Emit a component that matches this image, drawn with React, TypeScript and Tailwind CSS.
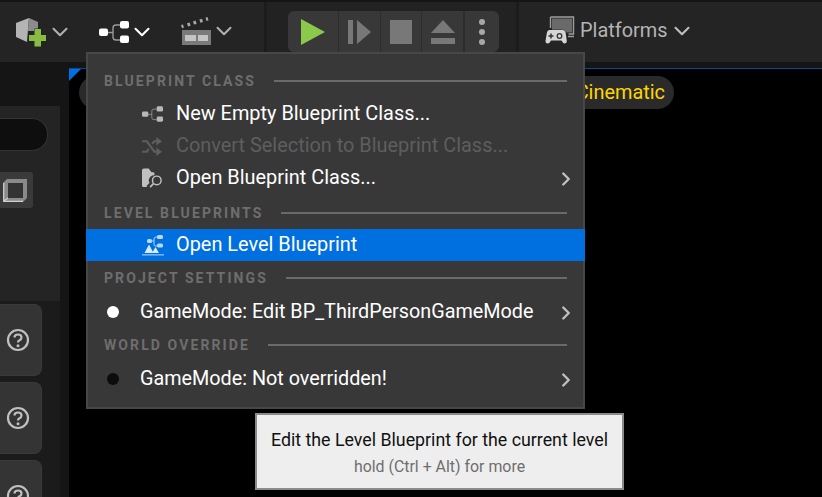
import {ChevronDown, ChevronRight} from 'lucide-react';
import {ReactNode} from 'react';

function BlueprintIcon({className, fill = '#fff', line = '#9a9a9a'}: {className?: string; fill?: string; line?: string}) {
  return (
    <svg viewBox="0 0 30 22" className={className}>
      <path d="M8 11.500h6M21 4h-4q-3 0-3 3v9q0 3 3 3h4" fill="none" stroke={line} strokeWidth="1.400" />
      <rect x="0" y="7.500" width="9" height="7.500" rx="2" fill={fill} />
      <rect x="21" y="0" width="9" height="7.500" rx="2" fill={fill} />
      <rect x="21" y="14.500" width="9" height="7.500" rx="2" fill={fill} />
    </svg>
  );
}

function AddActorIcon() {
  return (
    <svg viewBox="0 0 30 30" className="w-[30px] h-[30px]">
      <path d="M0 6 13 1l-1 11-1 13L0 20z" fill="#b4b4b4" />
      <path d="M13 1l9 4v9H11.500L12 12z" fill="#8c8c8c" />
      <path d="M18.500 12h6.500v6H30v6h-5v5.500h-6.500V24H13v-6h5.500z" fill="#86bd42" stroke="#242424" strokeWidth="1" paintOrder="stroke" />
    </svg>
  );
}

function CinematicIcon() {
  return (
    <svg viewBox="0 0 30 28" className="w-[30px] h-[28px]">
      <path d="M0 8 2 7.400l1 3.200-2 .6zM6 6.200 8.600 5.400l1 3.300-2.600.7zM12 4.400 14.600 3.600l1 3.300-2.600.7zM18.400 2.600 21 1.800l1 3.300-2.600.7zM24.500.8 26.500 0l1 3.200-2 .7z" fill="#a8a8a8" />
      <path d="M1 13h29v15H1z" fill="#7a7a7a" />
      <path d="M4 18h11v6H4zM17 18h10v6H17z" fill="#c4c4c4" />
    </svg>
  );
}

function PlatformsIcon() {
  return (
    <svg viewBox="0 0 30 30" className="w-[30px] h-[30px]">
      <path d="M5.500 1h23v17h-5M5.500 1v11" fill="none" stroke="#9e9e9e" strokeWidth="1.400" />
      <path d="M7 2.500h20v14H7z" fill="#6a6a6a" />
      <path d="M23 20.500h6" stroke="#9e9e9e" strokeWidth="1.500" />
      <path d="M4.500 14h13q3 0 3.500 5l.8 6q0 2.500-2.300 2.500-1.500 0-3-3H6q-1.500 3-3 3Q.5 27.500.5 25l1-6q.5-5 3-5z" fill="#d6d6d6" stroke="#242424" strokeWidth="0.800" paintOrder="stroke" />
      <path d="M3.500 20h5M6 17.500v5" stroke="#333" strokeWidth="1.500" />
      <circle cx="14.500" cy="20" r="2.300" fill="none" stroke="#333" strokeWidth="1.300" />
    </svg>
  );
}

function ShuffleIcon() {
  return (
    <svg viewBox="0 0 22 20" className="w-[21px] h-[19px]">
      <path d="M0 4.500h5l8 11h4M0 15.500h5l2-3M10.500 7l2.500-2.500h4" fill="none" stroke="#5e5e5e" strokeWidth="2.200" />
      <path d="M15 0l6 4.500-6 4.500zM15 11l6 4.500-6 4.500z" fill="#5e5e5e" />
    </svg>
  );
}

function FolderSearchIcon() {
  return (
    <svg viewBox="0 0 22 20" className="w-[21px] h-[20px]">
      <path d="M0 2q0-2 2-2h5l3 4h2q1 0 1 1v2q-5 0-6 5 0 2 1 3l-3 3v1.500H1.500Q0 19.500 0 18z" fill="#c0c0c0" />
      <circle cx="15.500" cy="12.500" r="4.500" fill="none" stroke="#c0c0c0" strokeWidth="1.500" />
      <path d="M12 16l-3.500 3.500" stroke="#c0c0c0" strokeWidth="1.800" />
    </svg>
  );
}

function LevelBlueprintIcon() {
  return (
    <svg viewBox="0 0 22 22" className="w-[22px] h-[22px]">
      <path d="M9 7h3M16 3h-2q-2 0-2 2v6q0 1 2 1h2" fill="none" stroke="#a8d0f5" strokeWidth="1" />
      <rect x="5" y="5" width="5" height="4" rx="1.500" fill="#b8daf8" />
      <rect x="15" y="1" width="6" height="4" rx="1.500" fill="#b8daf8" />
      <rect x="15" y="9.500" width="6" height="4" rx="1.500" fill="#b8daf8" />
      <path d="M7 10.500l4.500 8.500h-9zM13.500 13l3.500 6h-7z" fill="#d8eafc" />
      <path d="M0 21.500h22v-1.300H0z" fill="#8cc2f2" />
    </svg>
  );
}

function HelpTile() {
  return (
    <div className="w-[42px] h-[72px] rounded-r-[8px] bg-[#343434] border border-l-0 border-[#3a3a3a] flex items-center justify-end pr-[11px] shrink-0">
      <svg viewBox="0 0 24 24" className="w-[24px] h-[24px]">
        <circle cx="12" cy="12" r="10" fill="none" stroke="#c0c0c0" strokeWidth="2.200" />
        <path d="M8.500 9.500q0-3 3.500-3t3.500 3q0 1.800-2 2.700-1.500.7-1.500 2.300" fill="none" stroke="#c0c0c0" strokeWidth="2.200" />
        <circle cx="12" cy="17.800" r="1.500" fill="#c0c0c0" />
      </svg>
    </div>
  );
}

function SectionHeader({children, className}: {children: ReactNode; className?: string}) {
  return (
    <div className={`flex items-center h-[22px] pl-[16px] pr-[16px] gap-[18px] ${className ?? ''}`}>
      <span className="text-[14px] font-bold tracking-[2.1px] text-[#6e6e6e] whitespace-nowrap">{children}</span>
      <div className="flex-1 h-[2px] bg-[#6a6a6a]" />
    </div>
  );
}

function MenuRow({
  icon,
  label,
  disabled,
  active,
  submenu,
  wide,
  className,
}: {
  icon: ReactNode;
  label: string;
  disabled?: boolean;
  active?: boolean;
  submenu?: boolean;
  wide?: boolean;
  className?: string;
}) {
  return (
    <div
      className={`flex items-center h-[32px] relative ${wide ? 'pl-[18px]' : 'pl-[54px]'} ${active ? 'bg-[#0070e0] -mx-[2px] pl-[56px]' : ''} ${className ?? ''}`}
    >
      <span className="w-[34px] flex items-center shrink-0">{icon}</span>
      <span className={`${wide ? 'text-[19.8px]' : 'text-[19.9px]'} whitespace-nowrap ${disabled ? 'text-[#5e5e5e]' : 'text-white'}`}>{label}</span>
      {submenu && <ChevronRight className="absolute right-[6px] top-[6px] w-[22px] h-[22px] text-[#c0c0c0]" strokeWidth={2.6} />}
    </div>
  );
}

function Dot({color}: {color: string}) {
  return <span className={`block w-[12px] h-[12px] rounded-full ml-[1px] ${color}`} />;
}

function BlueprintMenu() {
  return (
    <div className="absolute left-[86px] top-[52px] w-[499px] h-[357px] bg-[#383838] border-2 border-[#474747] pt-[16px]">
      <SectionHeader>BLUEPRINT CLASS</SectionHeader>
      <div className="mt-[6px]">
        <MenuRow icon={<BlueprintIcon className="w-[21px] h-[16px]" fill="#b8b8b8" line="#8a8a8a" />} label="New Empty Blueprint Class..." />
        <MenuRow icon={<ShuffleIcon />} label="Convert Selection to Blueprint Class..." disabled />
        <MenuRow icon={<FolderSearchIcon />} label="Open Blueprint Class..." submenu />
      </div>
      <SectionHeader className="mt-[8px]">LEVEL BLUEPRINTS</SectionHeader>
      <MenuRow className="mt-[5px]" icon={<LevelBlueprintIcon />} label="Open Level Blueprint" active />
      <SectionHeader className="mt-[6px]">PROJECT SETTINGS</SectionHeader>
      <MenuRow className="mt-[7px]" icon={<Dot color="bg-white" />} label="GameMode: Edit BP_ThirdPersonGameMode" submenu wide />
      <SectionHeader className="mt-[6px]">WORLD OVERRIDE</SectionHeader>
      <MenuRow className="mt-[7px]" icon={<Dot color="bg-[#0c0c0c]" />} label="GameMode: Not overridden!" submenu wide />
    </div>
  );
}

function Tooltip() {
  return (
    <div className="absolute left-[255px] top-[413px] w-[369px] h-[77px] bg-[#eeeeee] border-2 border-[#8a8a8a] flex flex-col items-center pt-[12px]">
      <div className="text-[17.8px] leading-[26px] text-[#111] whitespace-nowrap">Edit the Level Blueprint for the current level</div>
      <div className="text-[15.9px] leading-[24px] mt-[2px] text-[#6e6e6e] whitespace-nowrap">hold (Ctrl + Alt) for more</div>
    </div>
  );
}

function PlayBar() {
  return (
    <div className="flex items-center h-[41px] w-[211px] bg-[#383838] rounded-[6px] ml-[21px] mt-[9px] self-start shrink-0">
      <div className="w-[51px] flex justify-center border-r border-[#2c2c2c] h-full items-center">
        <svg viewBox="0 0 24 26" className="w-[24px] h-[26px]"><path d="M0 0l24 13L0 26z" fill="#8cc84b" /></svg>
      </div>
      <div className="w-[42px] flex justify-center border-r border-[#2c2c2c] h-full items-center">
        <svg viewBox="0 0 23 24" className="w-[23px] h-[24px]"><path d="M0 0h5v24H0zM9 0l14 12L9 24z" fill="#787878" /></svg>
      </div>
      <div className="w-[41px] flex justify-center border-r border-[#2c2c2c] h-full items-center">
        <span className="block w-[22px] h-[24px] bg-[#787878]" />
      </div>
      <div className="w-[43px] flex justify-center border-r-2 border-[#2c2c2c] h-full items-center">
        <svg viewBox="0 0 24 24" className="w-[24px] h-[24px]"><path d="M12 0 24 13H0zM0 18h24v6H0z" fill="#787878" /></svg>
      </div>
      <div className="flex-1 flex flex-col items-center gap-[4px]">
        <span className="block w-[6px] h-[6px] rounded-full bg-[#a8a8a8]" />
        <span className="block w-[6px] h-[6px] rounded-full bg-[#a8a8a8]" />
        <span className="block w-[6px] h-[6px] rounded-full bg-[#a8a8a8]" />
      </div>
    </div>
  );
}

export default function App() {
  return (
    <div
      className="relative w-[822px] h-[497px] overflow-hidden bg-[#151515] text-white"
      style={{fontFamily: 'Roboto, "Liberation Sans", sans-serif'}}
    >
      {/* toolbar */}
      <div className="h-[62px] flex border-t-2 border-[#151515] bg-[#242424]">
        <div className="w-[267px] flex items-center shrink-0 border-r-[3px] border-[#1c1c1c]">
          <div className="ml-[16px] flex items-center">
            <AddActorIcon />
            <ChevronDown className="ml-[1px] w-[26px] h-[26px] text-[#b0b0b0]" strokeWidth={1.9} />
          </div>
          <div className="ml-[26px] flex items-center">
            <BlueprintIcon className="w-[30px] h-[22px]" />
            <ChevronDown className="w-[26px] h-[26px] text-white" strokeWidth={1.9} />
          </div>
          <div className="ml-[26px] flex items-center pb-[2px]">
            <CinematicIcon />
            <ChevronDown className="w-[26px] h-[26px] text-[#b0b0b0]" strokeWidth={1.9} />
          </div>
        </div>
        <div className="w-[252px] shrink-0 flex border-r-[3px] border-[#1c1c1c] bg-[#222]">
          <PlayBar />
        </div>
        <div className="flex items-center ml-[26px] pb-[2px]">
          <PlatformsIcon />
          <span className="ml-[5px] text-[19.9px] text-[#b4b4b4]">Platforms</span>
          <ChevronDown className="ml-[2px] w-[26px] h-[26px] text-[#c0c0c0]" strokeWidth={1.9} />
        </div>
      </div>

      <div className="flex h-[435px] pt-[6px]">
        {/* left column */}
        <div className="w-[69px] shrink-0 flex">
          <div className="w-[60px] flex flex-col bg-[#1b1b1b]">
            <div className="h-[38px] shrink-0 bg-[#151515]" />
            <div className="h-[195px] shrink-0 bg-[#242424] flex flex-col pt-[12px]">
              <div className="w-[48px] h-[33px] rounded-r-[16px] bg-[#0e0e0e] border border-l-0 border-[#333]" />
              <div className="mt-[21px] w-[33px] h-[36px] bg-[#3a3a3a] rounded-r-[3px] flex items-center justify-end pr-[6px]">
                <svg viewBox="0 0 24 24" className="w-[24px] h-[24px]">
                  <path d="M4 1h20v19l-4 4H0V5z" fill="#8a8a8a" />
                  <path d="M5 5h15v15H5z" fill="#333" />
                  <path d="M.7 5v18.300H20M0.700 23.300 5 20" fill="none" stroke="#cfcfcf" strokeWidth="1.200" />
                </svg>
              </div>
            </div>
            <div className="flex flex-col gap-[6px] pt-[3px]">
              <HelpTile />
              <HelpTile />
              <HelpTile />
            </div>
          </div>
        </div>
        {/* viewport */}
        <div className="flex-1 bg-black border-t border-[#0a4a9a] relative">
          <div className="absolute left-0 top-0 w-0 h-0 border-t-[12px] border-r-[12px] border-t-[#0070e0] border-r-transparent" />
          <div className="absolute left-[10px] top-[7px] w-[595px] h-[33px] rounded-full bg-[#2a2a2a] flex items-center justify-end pr-[9px]">
            <span className="text-[19.9px] text-[#ffd500]">Cinematic</span>
          </div>
        </div>
      </div>

      <BlueprintMenu />
      <Tooltip />
    </div>
  );
}
